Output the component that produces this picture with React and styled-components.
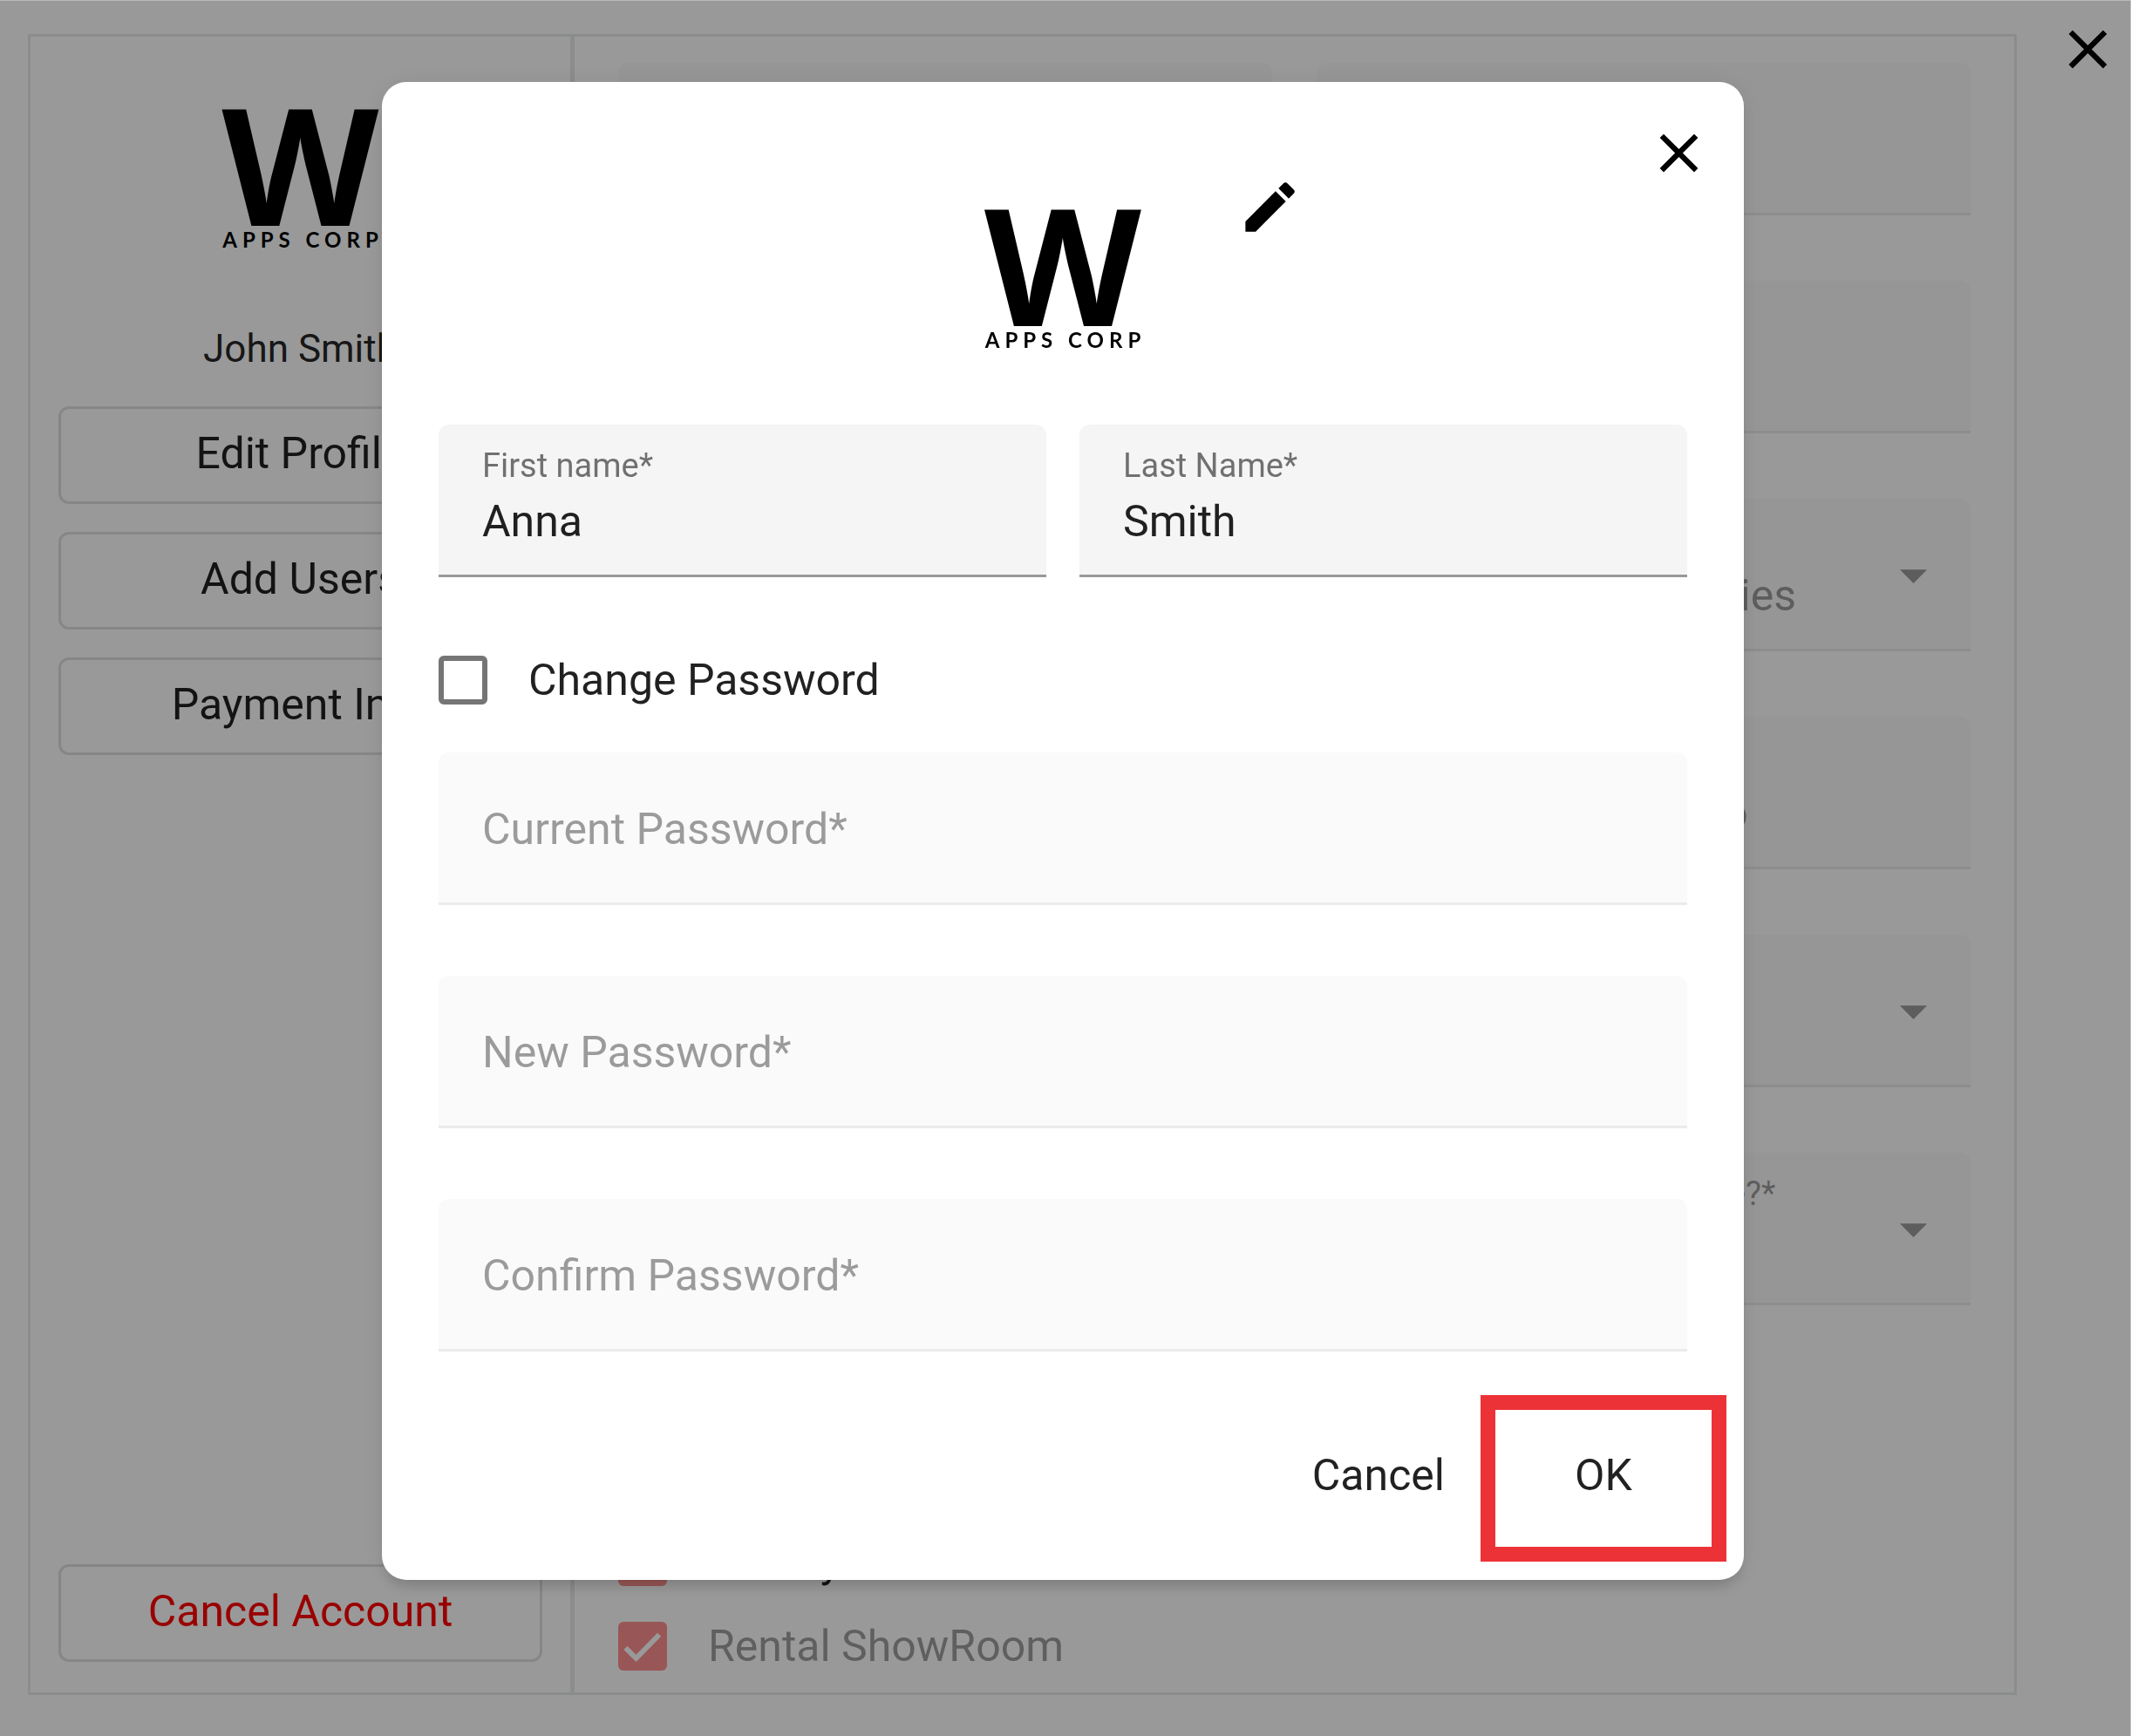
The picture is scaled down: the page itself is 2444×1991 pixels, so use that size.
import React, { useState } from 'react'
import styled, { createGlobalStyle } from 'styled-components'
import { MdArrowDropDown, MdClose, MdEdit } from 'react-icons/md'

const GlobalStyle = createGlobalStyle`
  * { box-sizing: border-box; }

  body {
    margin: 0;
    background: #ffffff;
    color: rgba(0, 0, 0, 0.87);
    font-family: Roboto, "Liberation Sans", sans-serif;
    font-size: 50px;
    line-height: 60px;
  }

  button, input, select { font: inherit; }
`

const Page = styled.div`
  min-height: 100vh;
  display: flex;
  align-items: stretch;
  padding: 39px 0 47px 32px;
`

const Panel = styled.div`
  flex: 1;
  min-width: 0;
  display: flex;
  border: 3px solid #e8ebec;
`

const Gutter = styled.div`
  width: 131px;
  display: flex;
  justify-content: flex-end;
  align-items: flex-start;
  padding-right: 12px;

  button { margin-top: -20px; }
`

const Sidebar = styled.aside`
  width: 624px;
  flex-shrink: 0;
  display: flex;
  flex-direction: column;
  align-items: stretch;
  gap: 32px;
  padding: 71px 32px 35px;
  border-right: 5px solid #e6e9ec;
`

const UserName = styled.p`
  margin: 49px 0 4px;
  text-align: center;
  font-size: 44px;
`

const MenuButton = styled.button`
  height: 112px;
  padding: 0 16px 4px;
  border: 3px solid #e0e0e0;
  border-radius: 12px;
  background: transparent;
  color: ${({ $danger }) => ($danger ? '#ff0000' : 'rgba(0, 0, 0, 0.87)')};
  margin-top: ${({ $danger }) => ($danger ? 'auto' : '0')};
  cursor: pointer;
`

const Main = styled.main`
  flex: 1;
  min-width: 0;
  display: flex;
  flex-direction: column;
  justify-content: space-between;
  padding: 30px 50px 23px;
`

const FieldGrid = styled.div`
  display: grid;
  grid-template-columns: 1fr 1fr;
  gap: ${({ $rowGap }) => $rowGap}px ${({ $columnGap }) => $columnGap}px;
`

const FieldBox = styled.div`
  height: 175px;
  display: flex;
  align-items: center;
  padding: 3px 50px 0;
  border-radius: 12px 12px 0 0;
  border-bottom: 3px solid ${({ $disabled }) => ($disabled ? '#ebebeb' : '#999999')};
  background: ${({ $disabled }) => ($disabled ? '#fafafa' : '#f5f5f5')};

  svg {
    flex-shrink: 0;
    width: 75px;
    height: 75px;
    margin-right: -22px;
    color: rgba(0, 0, 0, 0.38);
  }
`

const FieldBody = styled.div`
  flex: 1;
  min-width: 0;
  display: flex;
  flex-direction: column;
  gap: 12px;
  padding-bottom: 9px;

  label {
    height: 44px;
    font-size: 38px;
    line-height: 44px;
    white-space: nowrap;
    color: ${({ $disabled }) => ($disabled ? 'rgba(0, 0, 0, 0.38)' : 'rgba(0, 0, 0, 0.54)')};
  }
`

const controlStyle = `
  width: 100%;
  height: 60px;
  padding: 0;
  border: none;
  outline: none;
  background: transparent;
  color: rgba(0, 0, 0, 0.87);

  &:disabled {
    color: rgba(0, 0, 0, 0.38);
    opacity: 1;
  }
`

const Input = styled.input`
  ${controlStyle}

  &::placeholder {
    color: rgba(0, 0, 0, 0.38);
    opacity: 1;
  }
`

const Select = styled.select`
  ${controlStyle}
  appearance: none;
`

const CheckRow = styled.label`
  display: flex;
  align-items: center;
  gap: 47px;
  color: ${({ $disabled }) => ($disabled ? 'rgba(0, 0, 0, 0.38)' : 'inherit')};
`

const Checkbox = styled.input`
  appearance: none;
  flex-shrink: 0;
  width: 56px;
  height: 56px;
  margin: 0;
  border: 6px solid #757575;
  border-radius: 6px;

  &:checked {
    border: none;
    background: #ff8f8f url("data:image/svg+xml,%3Csvg xmlns='http://www.w3.org/2000/svg' viewBox='0 0 24 24'%3E%3Cpath fill='none' stroke='%23ffffff' stroke-width='2.5' d='M3.6 12.8 8.8 17.9 20.2 6.3'/%3E%3C/svg%3E") center / 56px no-repeat;
  }
`

const CheckList = styled.div`
  display: flex;
  flex-direction: column;
  gap: 37px;
`

const IconButton = styled.button`
  display: flex;
  padding: 0;
  border: none;
  background: transparent;
  color: #000000;
  cursor: pointer;

  svg { width: 75px; height: 75px; }
`

const LogoBox = styled.div`
  width: 180px;
  display: flex;
  flex-direction: column;
  align-items: center;
  align-self: center;
  color: #000000;
`

const LogoMark = styled.span`
  font-family: "Open Sans", sans-serif;
  font-size: 186px;
  font-weight: 700;
  line-height: 148px;
`

const LogoText = styled.span`
  padding-left: 6px;
  font-family: Lato, sans-serif;
  font-size: 24px;
  font-weight: 700;
  line-height: 28px;
  letter-spacing: 6px;
  white-space: nowrap;
`

const Overlay = styled.div`
  position: fixed;
  inset: 0;
  overflow: auto;
  padding: 93px 443px 94px 438px;
  border-top: 1px solid #b8bab9;
  border-right: 1px solid #b8bab9;
  background: rgba(0, 0, 0, 0.4);
`

const Dialog = styled.div`
  display: flex;
  flex-direction: column;
  padding: 44px 65px 21px;
  border-radius: 28px;
  background: #ffffff;
  box-shadow: 0 12px 16px -6px rgba(0, 0, 0, 0.16), 0 2px 30px rgba(0, 0, 0, 0.08);
`

const DialogHeader = styled.header`
  display: grid;
  grid-template-columns: 1fr 180px 1fr;
  height: 349px;
`

const HeaderSide = styled.div`
  display: flex;
  justify-content: space-between;
  align-items: flex-start;
  padding-left: 110px;
  margin-right: -28px;
`

const EditButton = styled(IconButton)`
  margin-top: 62px;
`

const HeaderLogo = styled.div`
  grid-column: 2;
  padding-top: 90px;
`

const PasswordRow = styled.div`
  padding: 88px 0 53px;
`

const PasswordFields = styled.div`
  display: flex;
  flex-direction: column;
  gap: 81px;
`

const Actions = styled.footer`
  display: flex;
  justify-content: flex-end;
  align-items: baseline;
  gap: 41px;
  margin: 50px -45px 0 0;
`

const ActionButton = styled.button`
  padding: 0;
  border: none;
  background: transparent;
  color: rgba(0, 0, 0, 0.87);
  cursor: pointer;
`

const ConfirmButton = styled(ActionButton)`
  width: 282px;
  height: 191px;
  padding-bottom: 8px;
  border: 17px solid #ed3237;
`

const Logo = () => (
  <LogoBox>
    <LogoMark>W</LogoMark>
    <LogoText>APPS CORP</LogoText>
  </LogoBox>
)

const Field = ({ id, label, disabled, options, value }) => {
  const [current, setCurrent] = useState(value || '')
  const controlProps = {
    id,
    disabled,
    value: current,
    onChange: (e) => setCurrent(e.target.value),
  }

  return (
    <FieldBox $disabled={disabled}>
      <FieldBody $disabled={disabled}>
        <label htmlFor={id}>{label}</label>
        {options ? (
          <Select {...controlProps}>
            {options.map((option) => <option key={option} value={option}>{option}</option>)}
          </Select>
        ) : (
          <Input type="text" {...controlProps} />
        )}
      </FieldBody>
      {options && <MdArrowDropDown />}
    </FieldBox>
  )
}

const profileFields = [
  { id: 'company', label: 'Company Name*' },
  { id: 'website', label: 'Website' },
  { id: 'address', label: 'Address*' },
  { id: 'city', label: 'City*' },
  { id: 'country', label: 'Country*', options: [''] },
  { id: 'industry', label: 'Industry*', options: ['Apparel & Accessories'], value: 'Apparel & Accessories' },
  { id: 'phone', label: 'Phone*' },
  { id: 'email', label: 'Email*', value: 'info@wappscorp.co' },
  { id: 'language', label: 'Language*', options: [''] },
  { id: 'currency', label: 'Currency*', options: [''] },
  { id: 'size', label: 'Company Size*', options: [''] },
  { id: 'rental', label: 'Do you offer rental service?*', options: [''] },
]

const passwordFields = ['Current Password*', 'New Password*', 'Confirm Password*']

const EditProfileDialog = () => {
  const [changePassword, setChangePassword] = useState(false)

  return (
    <Overlay>
      <Dialog role="dialog" aria-label="Edit Profile">
        <DialogHeader>
          <HeaderLogo><Logo /></HeaderLogo>
          <HeaderSide>
            <EditButton type="button" aria-label="Edit logo"><MdEdit /></EditButton>
            <IconButton type="button" aria-label="Close dialog"><MdClose /></IconButton>
          </HeaderSide>
        </DialogHeader>
        <FieldGrid $columnGap={38} $rowGap={0}>
          <Field id="firstName" label="First name*" value="Anna" />
          <Field id="lastName" label="Last Name*" value="Smith" />
        </FieldGrid>
        <PasswordRow>
          <CheckRow>
            <Checkbox type="checkbox" checked={changePassword} onChange={(e) => setChangePassword(e.target.checked)} />
            Change Password
          </CheckRow>
        </PasswordRow>
        <PasswordFields>
          {passwordFields.map((name) => (
            <FieldBox key={name} $disabled={!changePassword}>
              <Input type="password" placeholder={name} aria-label={name} disabled={!changePassword} />
            </FieldBox>
          ))}
        </PasswordFields>
        <Actions>
          <ActionButton type="button">Cancel</ActionButton>
          <ConfirmButton type="button">OK</ConfirmButton>
        </Actions>
      </Dialog>
    </Overlay>
  )
}

const App = () => (
  <>
    <GlobalStyle />
    <Page>
      <Panel>
        <Sidebar>
          <Logo />
          <UserName>John Smith</UserName>
          <MenuButton type="button">Edit Profile</MenuButton>
          <MenuButton type="button">Add Users</MenuButton>
          <MenuButton type="button">Payment Info</MenuButton>
          <MenuButton type="button" $danger>Cancel Account</MenuButton>
        </Sidebar>
        <Main>
          <FieldGrid $columnGap={51} $rowGap={75}>
            {profileFields.map((field) => <Field key={field.id} disabled {...field} />)}
          </FieldGrid>
          <CheckList>
            <CheckRow>
              <Checkbox type="checkbox" checked disabled readOnly />
              Beauty Salon
            </CheckRow>
            <CheckRow $disabled>
              <Checkbox type="checkbox" checked disabled readOnly />
              Rental ShowRoom
            </CheckRow>
          </CheckList>
        </Main>
      </Panel>
      <Gutter>
        <IconButton type="button" aria-label="Close"><MdClose /></IconButton>
      </Gutter>
    </Page>
    <EditProfileDialog />
  </>
)

export default App
